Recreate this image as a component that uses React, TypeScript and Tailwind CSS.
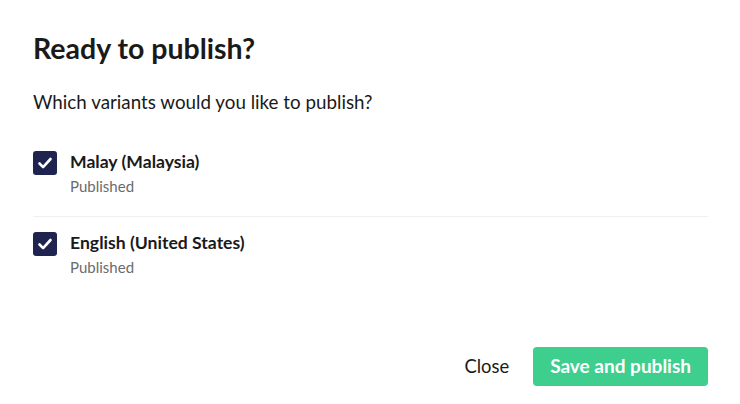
import React from "react";

function Check() {
  return (
    <div className="flex h-6 w-6 shrink-0 items-center justify-center rounded-[3px] bg-[#1e2350]">
      <svg width="24" height="24" viewBox="0 0 24 24" fill="none">
        <path d="M6.5 12.5l3.6 3.6L17.5 8" stroke="#fff" strokeWidth="2.6" strokeLinecap="round" strokeLinejoin="round" />
      </svg>
    </div>
  );
}

function Item({ label, last }: { label: string; last?: boolean }) {
  return (
    <div className={"flex items-start gap-[13px] " + (last ? "pt-[14px]" : "pb-[18px] border-b border-[#f0f0f0]")}>
      <div className="pt-[1px]">
        <Check />
      </div>
      <div className="flex flex-col">
        <span className="text-[17.6px] leading-6 font-bold text-[#1a1a1a]">{label}</span>
        <span className="text-[15px] leading-[24px] text-[#6b6b6b]">Published</span>
      </div>
    </div>
  );
}

export default function App() {
  return (
    <div className="flex h-[404px] w-[740px] flex-col bg-white px-[32px] pl-[33px] pt-8 pb-[18px] font-['Lato',sans-serif] text-[#1a1a1a]">
      <h1 className="text-[28.5px] leading-8 font-bold">Ready to publish?</h1>
      <p className="mt-[26px] text-[18.8px] leading-6">Which variants would you like to publish?</p>
      <div className="mt-9 flex flex-col">
        <Item label="Malay (Malaysia)" />
        <Item label="English (United States)" last />
      </div>
      <div className="mt-auto flex items-center justify-end gap-6">
        <button className="text-[18.4px] text-[#1a1a1a]">Close</button>
        <button className="h-[39px] rounded-[4px] bg-[#3ecf8e] px-[17px] text-[19px] font-bold text-white">Save and publish</button>
      </div>
    </div>
  );
}
